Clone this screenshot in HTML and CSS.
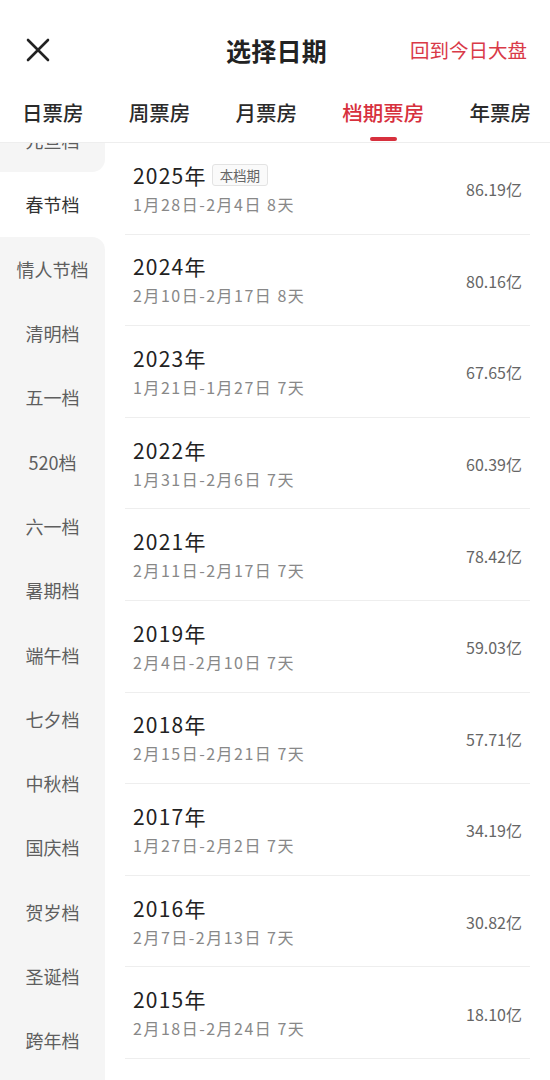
FILE: index.html
```html
<!DOCTYPE html>
<html lang="zh-CN">
<head>
<meta charset="utf-8">
<title>选择日期</title>
<link rel="stylesheet" href="styles.css">
</head>
<body>
<div class="page">
  <header class="header">
    <div class="topbar">
      <span class="close" aria-label="关闭">
        <svg width="24" height="24" viewBox="0 0 24 24"><path d="M2 2 L22 22 M22 2 L2 22" stroke="#222" stroke-width="2.6" stroke-linecap="round" fill="none"/></svg>
      </span>
      <h1 class="title">选择日期</h1>
      <a class="today">回到今日大盘</a>
    </div>
    <nav class="tabs">
      <div class="tab"><span class="tab-text">日票房</span></div>
      <div class="tab"><span class="tab-text">周票房</span></div>
      <div class="tab"><span class="tab-text">月票房</span></div>
      <div class="tab active"><span class="tab-text">档期票房</span><span class="bar"></span></div>
      <div class="tab"><span class="tab-text">年票房</span></div>
    </nav>
  </header>
  <main class="main">
    <aside class="side">
      <div class="side-item first before">元旦档</div>
      <div class="side-item active">春节档</div>
      <div class="side-item after">情人节档</div>
      <div class="side-item">清明档</div>
      <div class="side-item">五一档</div>
      <div class="side-item">520档</div>
      <div class="side-item">六一档</div>
      <div class="side-item">暑期档</div>
      <div class="side-item">端午档</div>
      <div class="side-item">七夕档</div>
      <div class="side-item">中秋档</div>
      <div class="side-item">国庆档</div>
      <div class="side-item">贺岁档</div>
      <div class="side-item">圣诞档</div>
      <div class="side-item">跨年档</div>
      <div class="side-fill"></div>
    </aside>
    <section class="list">
      <div class="row">
        <div class="info"><div class="year">2025年<span class="badge">本档期</span></div><div class="range">1月28日-2月4日 8天</div></div>
        <div class="amount">86.19亿</div>
      </div>
      <div class="row">
        <div class="info"><div class="year">2024年</div><div class="range">2月10日-2月17日 8天</div></div>
        <div class="amount">80.16亿</div>
      </div>
      <div class="row">
        <div class="info"><div class="year">2023年</div><div class="range">1月21日-1月27日 7天</div></div>
        <div class="amount">67.65亿</div>
      </div>
      <div class="row">
        <div class="info"><div class="year">2022年</div><div class="range">1月31日-2月6日 7天</div></div>
        <div class="amount">60.39亿</div>
      </div>
      <div class="row">
        <div class="info"><div class="year">2021年</div><div class="range">2月11日-2月17日 7天</div></div>
        <div class="amount">78.42亿</div>
      </div>
      <div class="row">
        <div class="info"><div class="year">2019年</div><div class="range">2月4日-2月10日 7天</div></div>
        <div class="amount">59.03亿</div>
      </div>
      <div class="row">
        <div class="info"><div class="year">2018年</div><div class="range">2月15日-2月21日 7天</div></div>
        <div class="amount">57.71亿</div>
      </div>
      <div class="row">
        <div class="info"><div class="year">2017年</div><div class="range">1月27日-2月2日 7天</div></div>
        <div class="amount">34.19亿</div>
      </div>
      <div class="row">
        <div class="info"><div class="year">2016年</div><div class="range">2月7日-2月13日 7天</div></div>
        <div class="amount">30.82亿</div>
      </div>
      <div class="row">
        <div class="info"><div class="year">2015年</div><div class="range">2月18日-2月24日 7天</div></div>
        <div class="amount">18.10亿</div>
      </div>
    </section>
  </main>
</div>
</body>
</html>
```
FILE: styles.css
```css
* { box-sizing: border-box; }
html, body { margin: 0; padding: 0; background: #fff; }
body {
  font-family: "Noto Sans CJK SC", "Noto Sans", sans-serif;
  color: #222;
}
.page {
  width: 550px;
  height: 1080px;
  overflow: hidden;
  display: flex;
  flex-direction: column;
}
.header {
  flex: none;
  height: 143px;
  border-bottom: 1px solid #eeeeee;
  position: relative;
  z-index: 2;
  background: #fff;
}
.topbar {
  height: 100px;
  display: grid;
  grid-template-columns: 1fr auto 1fr;
  align-items: center;
  padding: 0 23px 0 26px;
}
.close { display: flex; width: 24px; height: 24px; }
.title {
  margin: 0;
  font-size: 25px;
  font-weight: 700;
  color: #222;
  line-height: 32px;
  letter-spacing: 0.3px;
}
.today {
  justify-self: end;
  font-size: 19.5px;
  color: #d93a48;
  line-height: 26px;
}
.tabs {
  height: 42px;
  display: flex;
  justify-content: space-between;
  padding: 0 19px 0 22px;
}
.tab {
  display: flex;
  flex-direction: column;
  align-items: center;
}
.tab-text {
  font-size: 20.5px;
  line-height: 24px;
  font-weight: 500;
  color: #2a2a2a;
}
.tab.active .tab-text { color: #d7303d; }
.bar {
  margin-top: 13px;
  width: 27px;
  height: 4px;
  border-radius: 2px;
  background: #d7303d;
}
.main {
  flex: 1;
  display: flex;
  min-height: 0;
  overflow: hidden;
}
.side {
  flex: none;
  width: 105px;
  display: flex;
  flex-direction: column;
  background: #fff;
}
.side-item {
  flex: none;
  height: 64.3px;
  display: flex;
  align-items: center;
  justify-content: center;
  font-size: 18px;
  color: #5e5e5e;
  background: #f5f5f5;
}
.side-item.first { margin-top: -35px; }
.side-item.before { border-bottom-right-radius: 13px; }
.side-item.after { border-top-right-radius: 13px; }
.side-item.active { background: #fff; color: #333; }
.side-fill { flex: 1; background: #f5f5f5; }
.list {
  flex: 1;
  padding: 0 20px;
}
.row {
  height: 91.6px;
  border-bottom: 1px solid #eeeeee;
  display: flex;
  align-items: center;
  justify-content: space-between;
  padding: 0 8px;
}
.info { display: flex; flex-direction: column; }
.year {
  font-size: 21px;
  line-height: 28px;
  letter-spacing: 1.2px;
  color: #222;
  display: flex;
  align-items: center;
}
.badge {
  margin-left: 5px;
  font-size: 13.5px;
  line-height: 20px;
  letter-spacing: 0;
  padding: 0 7px;
  border: 1px solid #e3e3e3;
  border-radius: 3px;
  background: #fafafa;
  color: #666;
}
.range {
  margin-top: 3px;
  font-size: 16px;
  line-height: 24px;
  letter-spacing: 1.5px;
  color: #888;
}
.amount {
  font-size: 16px;
  color: #666;
  line-height: 22px;
  margin-top: 2px;
}
```
